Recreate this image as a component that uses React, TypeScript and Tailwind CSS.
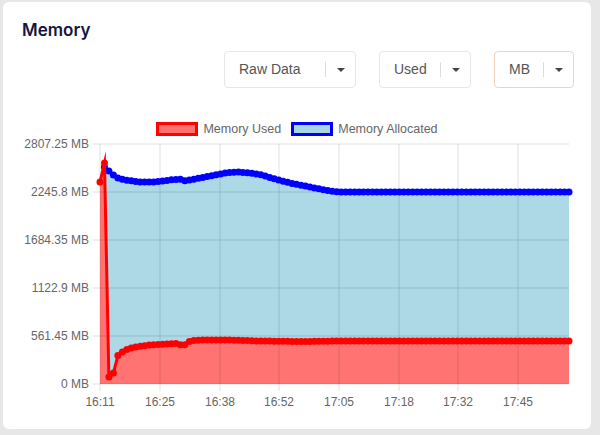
import { Fragment } from "react";

// Plot area in page pixels (the svg uses page coordinates through its viewBox).
const LEFT = 100;
const RIGHT = 569;
const TOP = 144;
const BOTTOM = 384;
const N = 106;
const STEP = (RIGHT - LEFT) / (N - 1);

const Y_LABELS = ["2807.25 MB", "2245.8 MB", "1684.35 MB", "1122.9 MB", "561.45 MB", "0 MB"];
const X_TICKS: [number, string][] = [
  [100, "16:11"],
  [160, "16:25"],
  [220, "16:38"],
  [279, "16:52"],
  [339, "17:05"],
  [399, "17:18"],
  [458, "17:32"],
  [518, "17:45"],
];

// Rough shape of each series, as (x, y) in page pixels.
const USED_KEYS: [number, number][] = [
  [113, 373], [118, 355], [125, 350], [135, 347], [150, 345], [165, 344],
  [178, 343.5], [183, 346], [190, 341], [200, 340], [230, 340], [260, 341],
  [300, 341.5], [340, 341], [569, 341],
];
const ALLOC_KEYS: [number, number][] = [
  [113, 176], [118, 178], [125, 180], [140, 182], [155, 182], [170, 180],
  [180, 179], [184, 181], [195, 179], [210, 176], [225, 173], [237, 172],
  [250, 173], [262, 175], [275, 179], [290, 183], [310, 187], [330, 191],
  [340, 192], [569, 192],
];

function interp(keys: [number, number][], x: number) {
  if (x <= keys[0][0]) return keys[0][1];
  for (let i = 1; i < keys.length; i++) {
    const [x1, y1] = keys[i];
    const [x0, y0] = keys[i - 1];
    if (x <= x1) return y0 + ((y1 - y0) * (x - x0)) / (x1 - x0);
  }
  return keys[keys.length - 1][1];
}

const xs = Array.from({ length: N }, (_, i) => LEFT + i * STEP);
const used: [number, number][] = xs.map((x, i) => {
  const early = [182, 163, 377, 373];
  return [x, i < early.length ? early[i] : interp(USED_KEYS, x)];
});
const alloc: [number, number][] = xs
  .map((x, i): [number, number] => {
    const early = [0, 167, 171, 175];
    return [x, i < early.length ? early[i] : interp(ALLOC_KEYS, x)];
  })
  .slice(1);

const toLine = (pts: [number, number][]) =>
  pts.map(([x, y], i) => `${i ? "L" : "M"}${x.toFixed(1)} ${y.toFixed(1)}`).join(" ");
const toArea = (pts: [number, number][]) =>
  `${toLine(pts)} L${pts[pts.length - 1][0].toFixed(1)} ${BOTTOM} L${pts[0][0].toFixed(1)} ${BOTTOM} Z`;

function Caret() {
  return (
    <svg width="8" height="4" viewBox="0 0 8 4" className="shrink-0">
      <path d="M0 0 L8 0 L4 4 Z" fill="#444" />
    </svg>
  );
}

function Select({ label, width, accent }: { label: string; width: string; accent?: boolean }) {
  return (
    <div
      className={`flex h-[37px] items-center rounded-[4px] border bg-white pl-[14px] ${width} ${
        accent ? "border-[#f3d2bb]" : "border-[#e6e6e6]"
      }`}
    >
      <span className="flex-1 text-[14px] text-[#555]">{label}</span>
      <span className="h-[15px] w-px bg-[#dcdcdc]" />
      <span className="flex w-[29px] justify-center">
        <Caret />
      </span>
    </div>
  );
}

function LegendItem({ label, fill, stroke }: { label: string; fill: string; stroke: string }) {
  return (
    <div className="flex items-center gap-[5px]">
      <span className={`h-[14px] w-[42px] border-[3px] ${fill} ${stroke}`} />
      <span className="text-[12.5px] leading-[14px] text-[#666]">{label}</span>
    </div>
  );
}

export default function App() {
  const gridY = Y_LABELS.map((_, i) => TOP + i * 48);

  return (
    <div className="h-[435px] w-[600px] bg-[#e7e7e7] pl-[3px] pt-[2px] font-['Liberation_Sans',Arial,sans-serif]">
      <div className="flex h-[427px] w-[588px] flex-col rounded-[6px] bg-white pt-[18px]">
        <h1 className="pl-[19px] font-['Inter',sans-serif] text-[17px] font-semibold leading-[21px] text-[#15163d]">
          Memory
        </h1>

        <div className="mt-[10px] flex justify-end gap-[23px] pr-[17px]">
          <Select label="Raw Data" width="w-[132px]" />
          <Select label="Used" width="w-[92px]" />
          <Select label="MB" width="w-[80px]" accent />
        </div>

        <div className="mt-[34px] flex justify-center gap-[10px]">
          <LegendItem label="Memory Used" fill="bg-[#ff7070]" stroke="border-[#ff0000]" />
          <LegendItem label="Memory Allocated" fill="bg-[#a9d6e6]" stroke="border-[#0000ff]" />
        </div>

        <svg width="588" height="272" viewBox="3 138 588 272" className="mt-[2px] block">
          <path d={toArea(alloc)} fill="#add8e6" />
          <path d={toArea(used)} fill="#ff7373" />

          {gridY.map((y) => (
            <line key={y} x1={93} x2={RIGHT} y1={y} y2={y} stroke="rgba(0,0,0,0.12)" strokeWidth={1} />
          ))}
          {X_TICKS.map(([x]) => (
            <line key={x} x1={x} x2={x} y1={TOP} y2={391} stroke="rgba(0,0,0,0.12)" strokeWidth={1} />
          ))}

          <path d={toLine(alloc)} fill="none" stroke="#0000ff" strokeWidth={3} strokeLinejoin="miter" />
          {alloc.map(([x, y], i) => (
            <circle key={`a${i}`} cx={x} cy={y} r={3.5} fill="#0000ff" />
          ))}
          <path
            d={toLine(used)}
            fill="none"
            stroke="#ff0000"
            strokeWidth={3}
            strokeLinejoin="miter"
            strokeMiterlimit={10}
          />
          {used.map(([x, y], i) => (
            <circle key={`u${i}`} cx={x} cy={y} r={3.5} fill="#ff0000" />
          ))}

          {Y_LABELS.map((label, i) => (
            <text
              key={label}
              x={89}
              y={gridY[i] + 4}
              textAnchor="end"
              fontSize={12}
              fill="#666"
              fontFamily="'Liberation Sans', Arial, sans-serif"
            >
              {label}
            </text>
          ))}
          {X_TICKS.map(([x, label]) => (
            <Fragment key={label}>
              <text
                x={x}
                y={406}
                textAnchor="middle"
                fontSize={12}
                fill="#666"
                fontFamily="'Liberation Sans', Arial, sans-serif"
              >
                {label}
              </text>
            </Fragment>
          ))}
        </svg>
      </div>
    </div>
  );
}
